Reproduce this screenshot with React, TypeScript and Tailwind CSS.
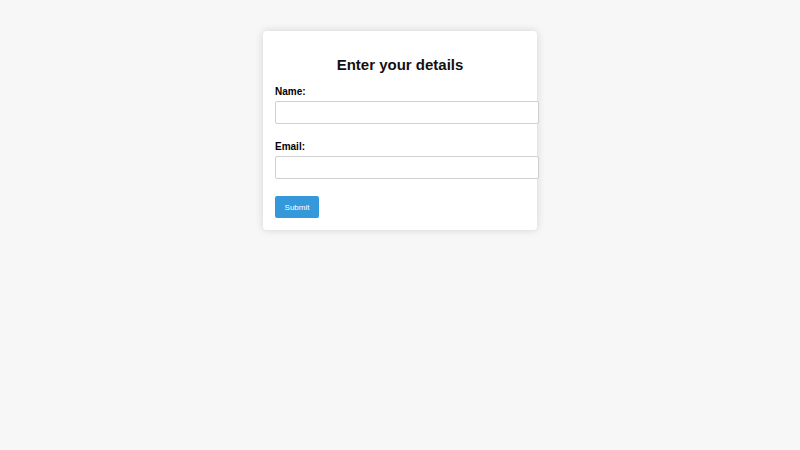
export default function App() {
  return (
    <div className="min-h-screen w-full bg-[#f7f7f7] pt-[31px]" style={{ fontFamily: "'Liberation Sans', Arial, sans-serif" }}>
      <div className="mx-auto w-[274px] rounded-[4px] bg-white px-[12px] pt-[12px] pb-[12px] shadow-[0_0_8px_rgba(0,0,0,0.15)]">
        <h2 className="mt-[13px] mb-[12px] text-center text-[15px] leading-[18px] font-bold text-[#111]">Enter your details</h2>
        <form onSubmit={e => e.preventDefault()}>
          <label className="mb-[3px] block text-[10px] leading-[12px] font-bold text-black">Name:</label>
          <input type="text" className="box-content block h-[21px] w-[250px] rounded-[2px] border border-[#d0d0d0] bg-white px-[6px] py-0 text-[10px] outline-none" />
          <label className="mt-[17px] mb-[3px] block text-[10px] leading-[12px] font-bold text-black">Email:</label>
          <input type="email" className="box-content block h-[21px] w-[250px] rounded-[2px] border border-[#d0d0d0] bg-white px-[6px] py-0 text-[10px] outline-none" />
          <button type="submit" className="mt-[17px] block h-[22px] w-[44px] rounded-[2px] bg-[#3498db] pt-[2px] text-[8px] leading-[20px] text-white">
            Submit
          </button>
        </form>
      </div>
    </div>
  );
}
